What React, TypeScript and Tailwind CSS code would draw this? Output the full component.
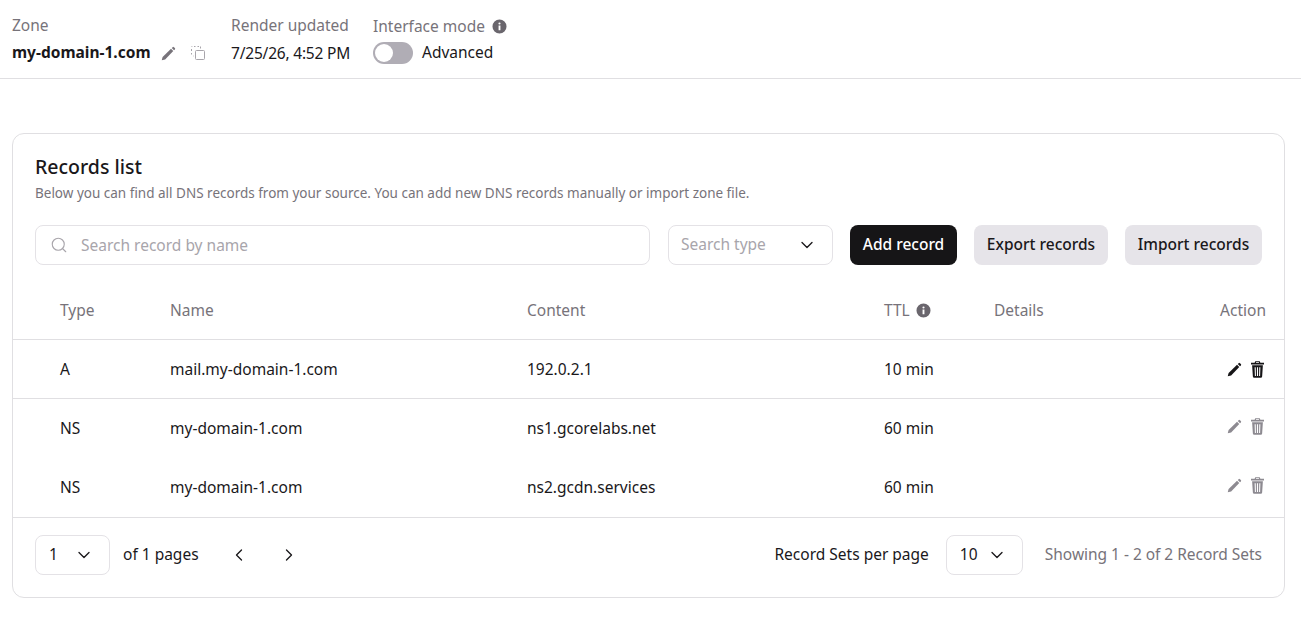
import { ChevronDown, ChevronLeft, ChevronRight, Search } from "lucide-react";

const records = [
  { type: "A", name: "mail.my-domain-1.com", content: "192.0.2.1", ttl: "10 min", active: true, border: true },
  { type: "NS", name: "my-domain-1.com", content: "ns1.gcorelabs.net", ttl: "60 min", active: false, border: false },
  { type: "NS", name: "my-domain-1.com", content: "ns2.gcdn.services", ttl: "60 min", active: false, border: false },
];

const gridCols = "grid grid-cols-[110px_357px_357px_110px_1fr_auto] pl-[47px] pr-[18px] items-center";

function PencilIcon({ className }: { className?: string }) {
  return (
    <svg viewBox="0 0 16 16" className={className} fill="currentColor">
      <path d="M0.800 15.200l.9-3.600L10.700 2.900l2.400 2.400-8.700 9-3.600.9z" />
      <path d="M11.500 2.100l.9-.9a1 1 0 0 1 1.400 0l1 1a1 1 0 0 1 0 1.400l-.9.900-2.400-2.400z" />
    </svg>
  );
}

function TrashIcon({ className }: { className?: string }) {
  return (
    <svg viewBox="0 0 14 18" className={className} fill="currentColor">
      <path d="M4.600 0h4.800l.7 1.600H14v1.900H0V1.600h3.900L4.600 0zM5.500 1h3l.2.600H5.300L5.500 1z" fillRule="evenodd" />
      <path fillRule="evenodd" d="M1.200 4.500h11.600l-.8 12a1.500 1.500 0 0 1-1.500 1.400H3.500A1.500 1.500 0 0 1 2 16.500L1.200 4.500zM3.900 6.500l.3 9.500h1.100l-.2-9.500H3.900zm2.500 0v9.500h1.200V6.500H6.400zm2.500 0l-.2 9.500h1.100l.3-9.500H8.900z" />
    </svg>
  );
}

function InfoIcon({ className }: { className?: string }) {
  return (
    <svg viewBox="0 0 16 16" className={className} fill="currentColor">
      <path fillRule="evenodd" d="M8 .5a7.500 7.500 0 1 1 0 15 7.500 7.500 0 0 1 0-15zM7 7v5h2V7H7zm1-3.400a1.150 1.150 0 1 0 0 2.300 1.150 1.150 0 0 0 0-2.300z" />
    </svg>
  );
}

function CopyIcon({ className }: { className?: string }) {
  return (
    <svg viewBox="0 0 16 16" className={className} fill="none" stroke="currentColor" strokeWidth="1">
      <rect x="5.500" y="5.500" width="9" height="9" rx="1" />
      <path d="M1.500 4v2M1.500 8v1.500M4 1.500h1.500M7.500 1.500H9M10.500 1.500v2M1.500 1.500h.8M3 11h.5" />
    </svg>
  );
}

function SelectBox({ value, className }: { value: string; className: string }) {
  return (
    <div className={`flex items-center justify-between h-10 bg-white border border-[#e4e2e6] rounded-lg ${className}`}>
      <span>{value}</span>
      <ChevronDown size={20} strokeWidth={1.6} className="text-[#1a181b]" />
    </div>
  );
}

export default function App() {
  return (
    <div className="min-h-[626px] bg-white text-[15.5px] text-[#1a181b] font-['Noto_Sans',sans-serif]">
      <header className="flex h-[79px] gap-[23px] pl-3 pt-[15px] border-b border-[#e0dfe2]">
        <div className="w-[196px]">
          <div className="text-[#77737a] leading-5">Zone</div>
          <div className="flex items-center mt-[8px] h-5">
            <span className="font-bold">my-domain-1.com</span>
            <PencilIcon className="w-[15px] h-[15px] ml-[10px] text-[#77737a]" />
            <CopyIcon className="w-4 h-4 ml-[14px] text-[#a8a5ab]" />
          </div>
        </div>
        <div className="w-[119px]">
          <div className="text-[#77737a] leading-5 whitespace-nowrap">Render updated</div>
          <div className="mt-[8px] leading-5 whitespace-nowrap tracking-[-0.2px]">7/25/26, 4:52 PM</div>
        </div>
        <div>
          <div className="flex items-center text-[#77737a] leading-5 pt-[1px]">
            Interface mode
            <InfoIcon className="w-[15px] h-[15px] ml-[7px] text-[#6a666d]" />
          </div>
          <div className="flex items-center mt-[5px]">
            <div className="flex items-center w-10 h-[22px] rounded-full bg-[#b0adb5] p-[2px]">
              <div className="w-[18px] h-[18px] rounded-full bg-white" />
            </div>
            <span className="ml-[9px]">Advanced</span>
          </div>
        </div>
      </header>

      <section className="mx-3 mt-[54px] w-[1273px] h-[465px] border border-[#e0dfe2] rounded-xl">
        <div className="pl-[22px] pr-[22px] pt-[19px]">
          <h2 className="text-[19.5px] font-medium leading-7">Records list</h2>
          <p className="mt-[3px] text-[13.5px] leading-[18px] text-[#77737a]">
            Below you can find all DNS records from your source. You can add new DNS records manually or import zone file.
          </p>
          <div className="flex items-center mt-[23px]">
            <div className="flex items-center w-[615px] h-10 border border-[#e4e2e6] rounded-lg pl-[14px] text-[#a8a5ab]">
              <Search size={18} strokeWidth={1.5} />
              <span className="ml-[13px] pt-[1px]">Search record by name</span>
            </div>
            <SelectBox value="Search type" className="w-[165px] ml-[18px] pl-[12px] pr-[15px] text-[#a8a5ab]" />
            <button className="h-10 w-[107px] ml-[17px] rounded-lg bg-[#161517] text-white font-medium">Add record</button>
            <button className="h-10 w-[134px] ml-[17px] rounded-lg bg-[#e6e4e9] font-medium">Export records</button>
            <button className="h-10 w-[137px] ml-[17px] rounded-lg bg-[#e6e4e9] font-medium">Import records</button>
          </div>
        </div>

        <div className={`${gridCols} h-[56px] mt-[19px] pb-[2px] text-[#77737a] border-b border-[#e0dfe2]`}>
          <span>Type</span>
          <span>Name</span>
          <span>Content</span>
          <span className="flex items-center">
            TTL
            <InfoIcon className="w-[15px] h-[15px] ml-[6px] text-[#6a666d]" />
          </span>
          <span>Details</span>
          <span>Action</span>
        </div>

        {records.map((r, i) => (
          <div key={i} className={`${gridCols} h-[59px] ${r.border ? "border-b border-[#e0dfe2] pt-[1px]" : ""}`}>
            <span>{r.type}</span>
            <span>{r.name}</span>
            <span>{r.content}</span>
            <span>{r.ttl}</span>
            <span />
            <span className={`flex items-center justify-end gap-[9px] pr-[2px] ${r.active ? "text-[#161517]" : "text-[#8d8a91] pb-[5px]"}`}>
              <PencilIcon className="w-[15px] h-[15px]" />
              <TrashIcon className="w-[13px] h-[17px]" />
            </span>
          </div>
        ))}

        <div className="flex items-center justify-between h-[80px] pl-[22px] pr-[22px] pb-[5px] border-t border-[#e0dfe2]">
          <div className="flex items-center">
            <SelectBox value="1" className="w-[75px] pl-[13px] pr-[15px]" />
            <span className="ml-[13px]">of 1 pages</span>
            <ChevronLeft size={20} strokeWidth={1.6} className="ml-[30px]" />
            <ChevronRight size={20} strokeWidth={1.6} className="ml-[30px]" />
          </div>
          <div className="flex items-center">
            <span>Record Sets per page</span>
            <SelectBox value="10" className="w-[77px] ml-[17px] pl-[13px] pr-[15px]" />
            <span className="ml-[22px] tracking-[-0.03px] text-[#77737a]">Showing 1 - 2 of 2 Record Sets</span>
          </div>
        </div>
      </section>
    </div>
  );
}
